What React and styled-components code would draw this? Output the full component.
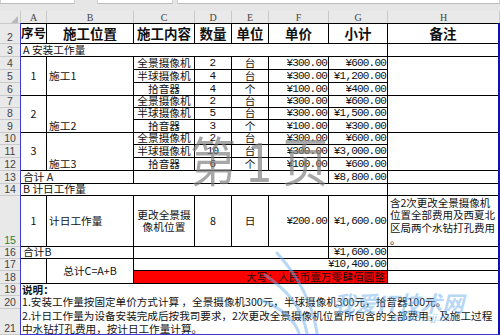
import React from "react";
import styled, { createGlobalStyle } from "styled-components";

const GlobalStyle = createGlobalStyle`
  html, body { margin: 0; padding: 0; background: #fff; }
  body { width: 500px; height: 335px; overflow: hidden; font-family: "Noto Sans CJK SC", sans-serif; }
  * { box-sizing: border-box; }
`;

const ROW_H = [20, 13, 13, 13, 13, 12, 12, 13, 12, 13, 13, 13, 12, 51, 12, 12, 13, 12, 13, 26];
const ROWS = ROW_H.map((h) => `${h - 1}px`).join(" ");
const COLS = "25px 86px 60px 36px 36px 59px 58px 110px";

const Page = styled.div`
  width: 500px;
  height: 335px;
  display: flex;
  flex-direction: column;
  overflow: hidden;
`;

const FormulaStrip = styled.div`
  height: 11px;
  background: #e6e6e6;
  display: flex;
  align-items: flex-start;
  gap: 4px;
`;

const Box = styled.div`
  height: 4px;
  width: ${(p) => p.$w || "auto"};
  flex: ${(p) => (p.$grow ? 1 : "none")};
  margin-right: ${(p) => p.$mr || 0};
  background: #fff;
  border-bottom: 1px solid #bcbcbc;
  border-left: 1px solid #cfcfcf;
  border-right: 1px solid #cfcfcf;
`;

const ColHeaderRow = styled.div`
  height: 12px;
  display: grid;
  grid-template-columns: 21px 26px 87px 61px 37px 37px 60px 59px 112px;
  background: #e9e9e9;
`;

const Corner = styled.div`
  border-right: 1px solid #c9c9c9;
  display: flex;
  justify-content: flex-end;
  align-items: flex-end;
  padding: 0 2px 1px 0;
`;

const Triangle = styled.div`
  width: 0;
  height: 0;
  border-left: 7px solid transparent;
  border-bottom: 7px solid #b9b9b9;
`;

const ColHead = styled.div`
  border-right: 1px solid #c9c9c9;
  font-family: "Liberation Serif", serif;
  font-size: 10px;
  line-height: 13px;
  color: #444;
  text-align: center;
`;

const Body = styled.div`
  display: flex;
  height: 312px;
`;

const RowHeads = styled.div`
  width: 20px;
  display: grid;
  grid-template-rows: ${ROWS};
  row-gap: 1px;
  padding-top: 1px;
  background: #cacaca;
  align-content: start;
`;

const RowHead = styled.div`
  background: #e9e9e9;
  display: flex;
  align-items: flex-end;
  justify-content: center;
  font-family: "Liberation Sans", sans-serif;
  font-size: 10.5px;
  line-height: 1;
  padding-bottom: 1px;
  color: ${(p) => (p.$active ? "#2e7d32" : "#444")};
`;

const Sheet = styled.div`
  position: relative;
  width: 480px;
  display: grid;
  grid-template-columns: ${COLS};
  grid-template-rows: ${ROWS};
  gap: 1px;
  padding-top: 1px;
  background: #000;
  border-left: 1px solid #3a3ad6;
  border-right: 2px solid #1010b0;
  border-bottom: 1px solid #3a3ad6;
  align-content: start;
`;

const Cell = styled.div`
  grid-column: ${(p) => p.$col};
  grid-row: ${(p) => p.$row};
  background: ${(p) => p.$bg || "#fff"};
  display: flex;
  align-items: ${(p) => p.$v || "center"};
  justify-content: ${(p) => p.$h || "center"};
  padding: 0 2px;
  font-size: 10.7px;
  line-height: 1;
  white-space: nowrap;
  color: #111;
`;

const HeadCell = styled(Cell)`
  font-size: ${(p) => p.$size || "13.5px"};
  font-weight: 700;
  padding: 0;
`;

const NumCell = styled(Cell)`
  font-family: "Liberation Mono", monospace;
  font-size: 11px;
  letter-spacing: -0.8px;
  padding: 0 1px 0 0;
`;

const MultiLine = styled(Cell)`
  flex-direction: column;
  line-height: ${(p) => p.$lh || "12px"};
  font-size: ${(p) => p.$size || "10.7px"};
  align-items: ${(p) => p.$items || "center"};
  justify-content: ${(p) => p.$justify || "center"};
  padding: ${(p) => p.$pad || "0 2px"};
`;

const NotesCell = styled.div`
  grid-column: 1 / 9;
  grid-row: 18 / 21;
  background: #fff;
  display: grid;
  grid-template-rows: 12px 13px 25px;
  padding-left: 1px;
  font-size: 10.6px;
  color: #111;
  white-space: nowrap;
`;

const NoteLine = styled.div`
  display: flex;
  align-items: center;
  line-height: 1;
  font-weight: ${(p) => (p.$bold ? 700 : 400)};
`;

const NoteWrap = styled.div`
  line-height: 13.4px;
`;

const PageMark = styled.div`
  position: absolute;
  left: 169px;
  top: 110px;
  font-size: 46px;
  line-height: 1;
  font-weight: 400;
  color: rgba(125, 125, 125, 0.68);
  white-space: pre;
  transform: scaleY(1.15);
  transform-origin: left top;
  pointer-events: none;
`;

const Watermark = styled.div`
  position: absolute;
  left: 236px;
  top: 222px;
  width: 240px;
  height: 90px;
  pointer-events: none;
`;

const WmText = styled.div`
  position: absolute;
  left: ${(p) => p.$x}px;
  top: ${(p) => p.$y}px;
  font-size: ${(p) => p.$size}px;
  font-weight: 700;
  font-style: italic;
  color: rgba(110, 175, 235, 0.5);
  white-space: nowrap;
  line-height: 1;
`;

const groups = [
  {
    start: 3,
    no: "1",
    name: "施工1",
    nameV: "center",
    rows: [
      ["全景摄像机", "2", "台", "¥300.00", "¥600.00"],
      ["半球摄像机", "4", "台", "¥300.00", "¥1,200.00"],
      ["拾音器", "4", "个", "¥100.00", "¥400.00"],
    ],
  },
  {
    start: 6,
    no: "2",
    name: "施工2",
    nameV: "flex-end",
    rows: [
      ["全景摄像机", "2", "台", "¥300.00", "¥600.00"],
      ["半球摄像机", "5", "台", "¥300.00", "¥1,500.00"],
      ["拾音器", "3", "个", "¥100.00", "¥300.00"],
    ],
  },
  {
    start: 9,
    no: "3",
    name: "施工3",
    nameV: "flex-end",
    rows: [
      ["全景摄像机", "2", "台", "¥300.00", "¥600.00"],
      ["半球摄像机", "10", "台", "¥300.00", "¥3,000.00"],
      ["拾音器", "6", "个", "¥100.00", "¥600.00"],
    ],
  },
];

const headers = [
  ["序号", "12.5px"],
  ["施工位置"],
  ["施工内容"],
  ["数量"],
  ["单位"],
  ["单价"],
  ["小计"],
  ["备注"],
];

export default function App() {
  const rowNums = Array.from({ length: 20 }, (_, i) => i + 2);
  return (
    <Page>
      <GlobalStyle />
      <FormulaStrip>
        <Box $w="75px" $mr="18px" />
        <Box $w="76px" />
        <Box $grow />
      </FormulaStrip>
      <ColHeaderRow>
        <Corner>
          <Triangle />
        </Corner>
        {["A", "B", "C", "D", "E", "F", "G", "H"].map((l) => (
          <ColHead key={l}>{l}</ColHead>
        ))}
      </ColHeaderRow>
      <Body>
        <RowHeads>
          {rowNums.map((n) => (
            <RowHead key={n} $active={n === 15}>
              {n}
            </RowHead>
          ))}
        </RowHeads>
        <Sheet>
          {headers.map(([t, s], i) => (
            <HeadCell key={t} $col={`${i + 1}`} $row="1" $size={s}>
              {t}
            </HeadCell>
          ))}

          <Cell $col="1 / 8" $row="2" $h="flex-start">A 安装工作量</Cell>
          <Cell $col="8" $row="2" />

          {groups.map((g) => (
            <React.Fragment key={g.no}>
              <Cell $col="1" $row={`${g.start} / span 3`}>{g.no}</Cell>
              <Cell $col="2" $row={`${g.start} / span 3`} $h="flex-start" $v={g.nameV}>
                {g.name}
              </Cell>
              {g.rows.map((r, i) => (
                <React.Fragment key={i}>
                  <Cell $col="3" $row={`${g.start + i}`}>{r[0]}</Cell>
                  <NumCell $col="4" $row={`${g.start + i}`} $h="center">{r[1]}</NumCell>
                  <Cell $col="5" $row={`${g.start + i}`}>{r[2]}</Cell>
                  <NumCell $col="6" $row={`${g.start + i}`} $h="flex-end">{r[3]}</NumCell>
                  <NumCell $col="7" $row={`${g.start + i}`} $h="flex-end">{r[4]}</NumCell>
                </React.Fragment>
              ))}
              <Cell $col="8" $row={`${g.start} / span 3`} />
            </React.Fragment>
          ))}

          <Cell $col="1 / 3" $row="12" $h="flex-start">合计 A</Cell>
          <Cell $col="3 / 7" $row="12" />
          <NumCell $col="7" $row="12" $h="flex-end">¥8,800.00</NumCell>
          <Cell $col="8" $row="12" />

          <Cell $col="1 / 8" $row="13" $h="flex-start">B 计日工作量</Cell>
          <Cell $col="8" $row="13" />

          <Cell $col="1" $row="14">1</Cell>
          <Cell $col="2" $row="14" $h="flex-start">计日工作量</Cell>
          <MultiLine $col="3" $row="14">
            <span>更改全景摄</span>
            <span>像机位置</span>
          </MultiLine>
          <Cell $col="4" $row="14">8</Cell>
          <Cell $col="5" $row="14">日</Cell>
          <NumCell $col="6" $row="14" $h="flex-end">¥200.00</NumCell>
          <NumCell $col="7" $row="14" $h="flex-end">¥1,600.00</NumCell>
          <MultiLine
            $col="8"
            $row="14"
            $items="flex-start"
            $justify="flex-start"
            $lh="12.3px"
            $size="10.5px"
            $pad="1px 0 0 2px"
          >
            <span>含2次更改全景摄像机</span>
            <span>位置全部费用及西夏北</span>
            <span>区局两个水钻打孔费用</span>
            <span>。</span>
          </MultiLine>

          <Cell $col="1 / 3" $row="15" $h="flex-start">合计B</Cell>
          <Cell $col="3 / 7" $row="15" />
          <NumCell $col="7" $row="15" $h="flex-end">¥1,600.00</NumCell>
          <Cell $col="8" $row="15" />

          <Cell $col="1" $row="16 / span 2" />
          <Cell $col="2" $row="16 / span 2">总计C=A+B</Cell>
          <NumCell $col="3 / 8" $row="16" $h="flex-end">¥10,400.00</NumCell>
          <Cell $col="8" $row="16" />
          <Cell $col="3 / 8" $row="17" $h="flex-end" $bg="#ff0000">
            大写：人民币壹万零肆佰圆整
          </Cell>
          <Cell $col="8" $row="17" />

          <NotesCell>
            <NoteLine $bold>说明：</NoteLine>
            <NoteLine>1.安装工作量按固定单价方式计算 ，全景摄像机300元，半球摄像机300元，拾音器100元。</NoteLine>
            <NoteWrap>
              2.计日工作量为设备安装完成后按我司要求，2次更改全景摄像机位置所包含的全部费用，及施工过程
              <br />
              中水钻打孔费用，按计日工作量计算。
            </NoteWrap>
          </NotesCell>

          <PageMark>第 1 页</PageMark>

          <Watermark>
            <svg width="90" height="90" viewBox="0 0 90 90" style={{ position: "absolute", left: 0, top: 0 }}>
              <g fill="none" stroke="rgba(110,175,235,0.5)" strokeWidth="3" strokeLinecap="round">
                <path d="M20 8 C 40 30, 55 55, 60 88" />
                <path d="M8 30 C 30 45, 45 62, 50 88" />
                <path d="M4 55 C 22 62, 36 72, 42 88" />
              </g>
            </svg>
            <WmText $x={76} $y={46} $size={22}>我爱IT技术网</WmText>
            <WmText $x={133} $y={68} $size={9}>www.52zjj.com</WmText>
          </Watermark>
        </Sheet>
      </Body>
    </Page>
  );
}
